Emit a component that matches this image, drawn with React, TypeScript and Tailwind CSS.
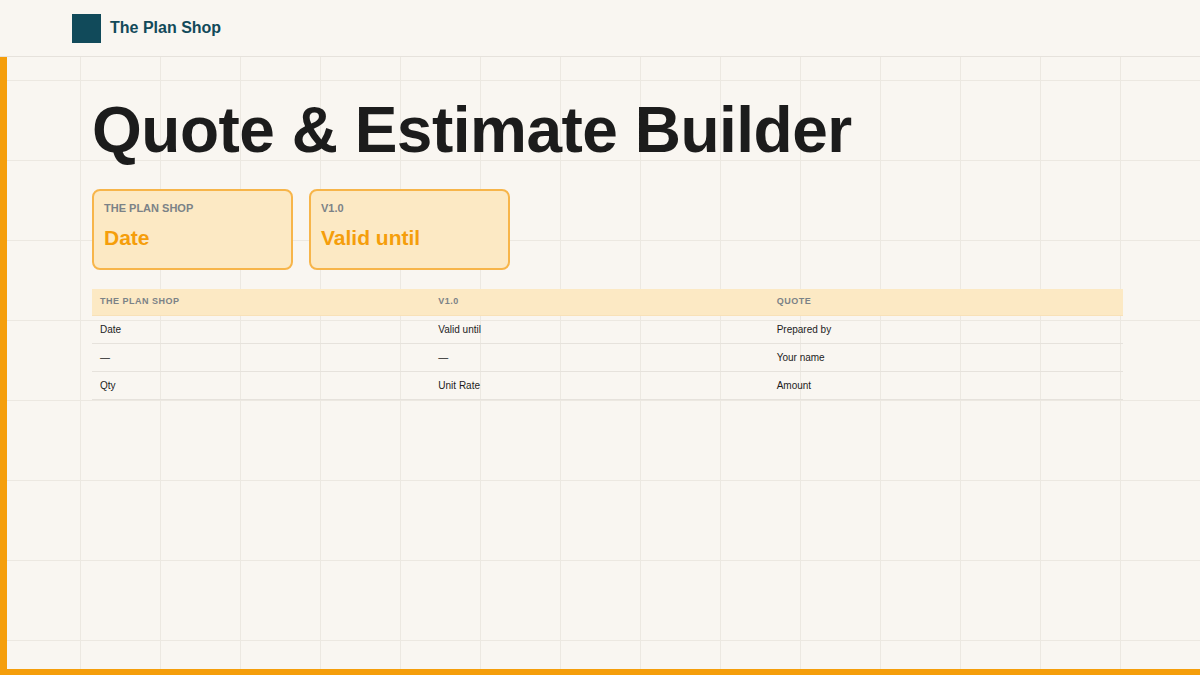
export default function App() {
  const rows = [
    ["Date", "Valid until", "Prepared by"],
    ["—", "—", "Your name"],
    ["Qty", "Unit Rate", "Amount"],
  ];
  return (
    <div
      className="relative w-[1200px] h-[675px] overflow-hidden bg-[#f9f6f1] bg-[linear-gradient(to_right,#ece8e1_1px,transparent_1px),linear-gradient(to_bottom,#ece8e1_1px,transparent_1px)] bg-[size:80px_80px]"
      style={{ fontFamily: '"Liberation Sans", Arial, sans-serif' }}
    >
      <div className="h-[57px] bg-[#f9f6f1] border-b border-[#e6e2dc] flex items-center pl-[72px] gap-[9px]">
        <div className="w-[29px] h-[29px] bg-[#114a5a]" />
        <span className="text-[16px] font-bold text-[#124a5a]">The Plan Shop</span>
      </div>
      <div className="flex h-[612px]">
        <div className="w-[7px] bg-[#f59e0b]" />
        <div className="flex-1 pl-[85px] pr-[77px]">
          <h1 className="text-[64px] font-bold text-[#1c1c1c] leading-none mt-[41px] tracking-[-0.5px]">Quote &amp; Estimate Builder</h1>
          <div className="flex gap-[16px] mt-[27px]">
            {[["THE PLAN SHOP", "Date"], ["V1.0", "Valid until"]].map(([l, v]) => (
              <div key={l} className="w-[201px] h-[81px] rounded-[8px] border-2 border-[#f7b54a] bg-[#fce9c4] px-[10px] pt-[9px]">
                <div className="text-[11px] font-bold text-[#7b8287]">{l}</div>
                <div className="text-[21px] font-bold text-[#f59e0b] mt-[5px]">{v}</div>
              </div>
            ))}
          </div>
          <div className="mt-[19px]">
            <div className="grid grid-cols-3 h-[27px] items-center bg-[#fce9c4] border-b border-[#f8e1b8] px-[8px]">
              {["THE PLAN SHOP", "V1.0", "QUOTE"].map((h) => (
                <div key={h} className="text-[9px] font-bold text-[#7b8287] tracking-[0.5px]">{h}</div>
              ))}
            </div>
            {rows.map((r, i) => (
              <div key={i} className="grid grid-cols-3 h-[28px] items-center border-b border-[#e6e2dc] px-[8px]">
                {r.map((c, j) => (
                  <div key={j} className="text-[10px] text-[#1c1c1c]">{c}</div>
                ))}
              </div>
            ))}
          </div>
        </div>
      </div>
      <div className="h-[6px] bg-[#f59e0b]" />
    </div>
  );
}
